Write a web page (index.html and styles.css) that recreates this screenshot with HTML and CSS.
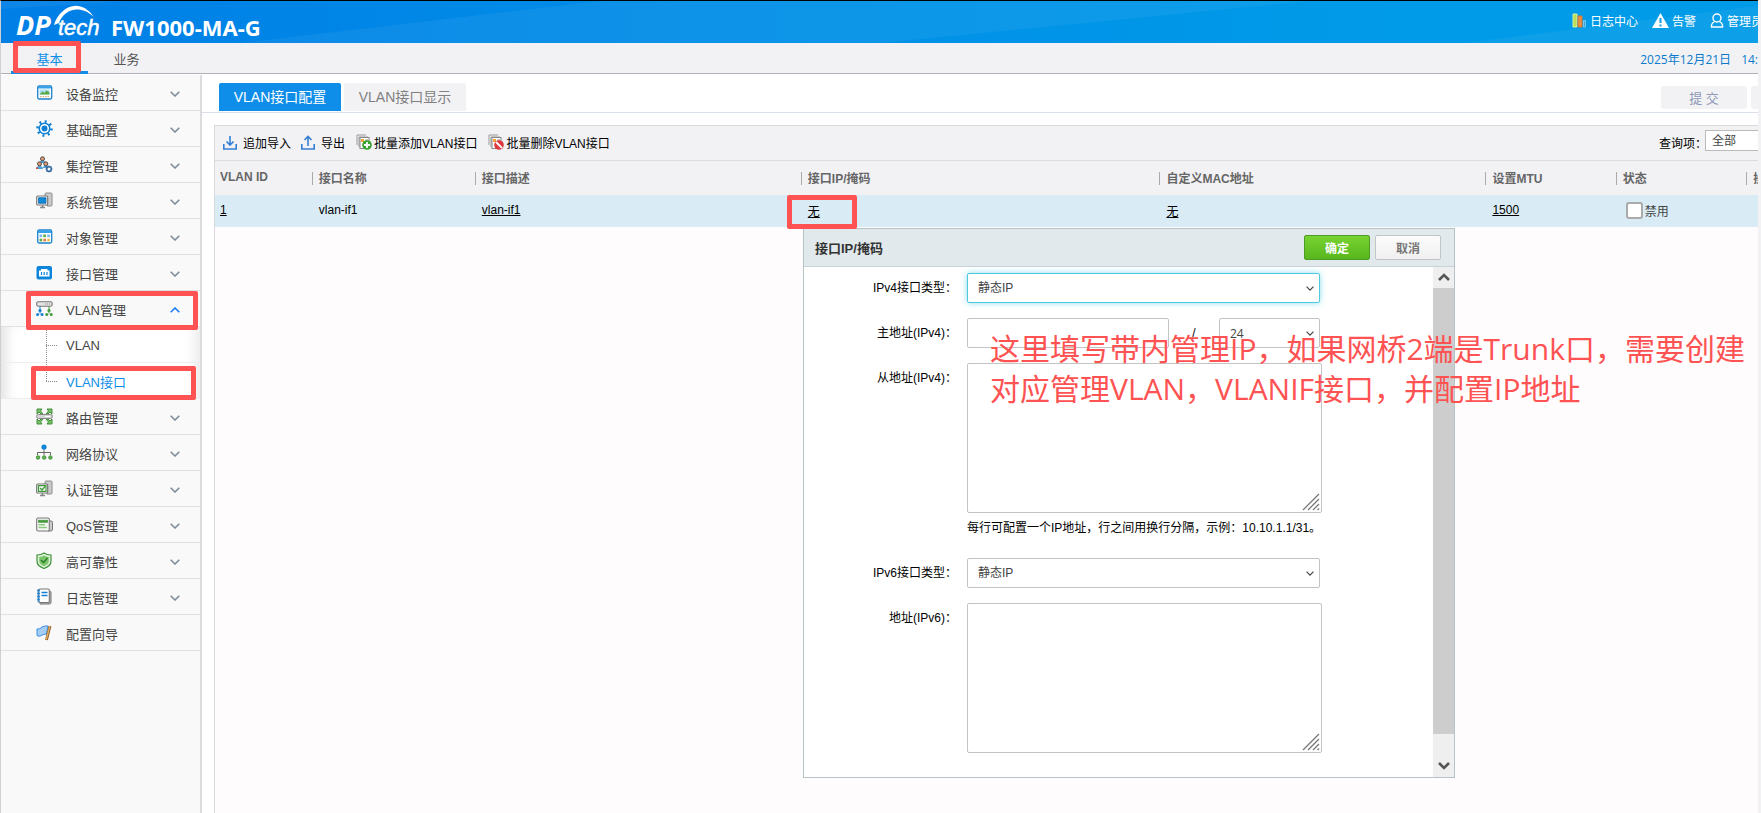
FILE: index.html
```html
<!DOCTYPE html>
<html lang="zh-CN">
<head>
  <meta charset="UTF-8" />
  <meta name="viewport" content="width=device-width, initial-scale=1.0" />
  <title>FW1000-MA-G</title>
  <link rel="stylesheet" href="styles.css">
</head>
<body>

<svg class="sprite" aria-hidden="true">
  <symbol id="chev-down" viewBox="0 0 10 6"><path d="M.7.7 5 5 9.3.7" fill="none" stroke="currentColor" stroke-width="1.5"/></symbol>
  <symbol id="chev-up" viewBox="0 0 10 6"><path d="M.7 5.3 5 1l4.3 4.3" fill="none" stroke="currentColor" stroke-width="1.5"/></symbol>
  <symbol id="arrow-up" viewBox="0 0 12 8"><path d="M1 7 6 2l5 5" fill="none" stroke="currentColor" stroke-width="2.6"/></symbol>
  <symbol id="arrow-down" viewBox="0 0 12 8"><path d="m1 1 5 5 5-5" fill="none" stroke="currentColor" stroke-width="2.6"/></symbol>
  <symbol id="grip" viewBox="0 0 18 18"><path d="M1 17 17 1M6 17 17 6M11 17l6-6M15.500 17l1.500-1.500" stroke="#777" stroke-width="1.300"/></symbol>
  <symbol id="pc" viewBox="0 0 17 17"><path d="M9 4V2q0-1 1-1h5q1 0 1 1v11q0 1-1 1h-4z" fill="#ccc" stroke="#8c8c8c"/><rect x=".7" y="4" width="11" height="9" rx="1" fill="#fff" stroke="#777" stroke-width="1.200"/><path d="M4 15.500h5M6.500 13v3" stroke="#888" stroke-width="1.500"/></symbol>
</svg>

<div class="app">

  <!-- Header -->
  <header class="header">
    <svg class="facets" viewBox="0 0 1758 42" preserveAspectRatio="none" fill="#fff" aria-hidden="true">
      <path d="M0 0h130L0 8zM240 42 600 0h710L880 42zM1465 42l293-37v37z"/>
    </svg>
    <svg class="logo" viewBox="0 0 100 38" role="img" aria-label="DPtech">
      <text x="15" y="34" class="logo-dp">DP</text>
      <text x="57" y="34" class="logo-tech">tech</text>
      <path d="M53 24C58 7 78-5 93 16 79 3 63 8 58 22z" fill="#fff"/>
    </svg>
    <h1>FW1000-MA-G</h1>
    <div class="header-links">
      <a href="#">
        <svg width="15" height="15" viewBox="0 0 15 15"><path d="M1 1h4v13H1z" fill="#b9dd55" stroke="#d9f0a0"/><path d="M6 3h4v11H6z" fill="#ef8d3a" stroke="#c77a3c"/><path d="M11.500 7.500h2v6.500h-2z" fill="#3aa4dc" stroke="#79c8ef"/></svg>
        日志中心
      </a>
      <a href="#">
        <svg width="17" height="15" viewBox="0 0 17 15"><path d="M8.500 0 17 15H0z" fill="#fff"/><path d="M7.500 5h2v5h-2zM7.500 11.500h2v2h-2z" fill="#079ae6"/></svg>
        告警
      </a>
      <a href="#">
        <svg width="14" height="15" viewBox="0 0 14 15" fill="none" stroke="#fff" stroke-width="1.400"><circle cx="7" cy="5" r="4"/><path d="M4.500 8.500Q1 10.500 1.500 14h11Q13 10.500 9.500 8.500"/></svg>
        管理员
      </a>
    </div>
  </header>

  <nav class="topnav">
    <a href="#" class="current">基本</a>
    <a href="#">业务</a>
    <div class="clock"><span>2025年12月21日</span><span>14:</span></div>
  </nav>

  <div class="main">

    <!-- Sidebar -->
    <aside class="sidebar">
      <ul class="menu">
        <li><a href="#">
          <svg class="icon" viewBox="0 0 17 17"><rect x="1.700" y="2" width="14" height="13" rx="1.500" fill="#fff" stroke="#1b82cf" stroke-width="1.300"/><path d="M2 2.500h13.400v2H2z" fill="#36a0ea"/><path d="M3.500 5.500h10v5h-10z" fill="#aadcf5"/><path d="m3.500 10.500 3-3 2 1.500 2-2.500 3 2v2z" fill="#58a942"/><path d="M4 12.700h9.500" stroke="#d39a63" stroke-dasharray="1.500 1"/></svg>
          <span>设备监控</span><svg class="chev"><use href="#chev-down"/></svg></a></li>
        <li><a href="#">
          <svg class="icon" viewBox="0 0 17 17"><circle cx="8.500" cy="8.500" r="7" fill="none" stroke="#0f80d4" stroke-width="2.600" stroke-dasharray="2 3.498"/><circle cx="8.500" cy="8.500" r="5.300" fill="#fff" stroke="#0f80d4" stroke-width="1.500"/><circle cx="8.500" cy="8.500" r="3" fill="#0f80d4"/></svg>
          <span>基础配置</span><svg class="chev"><use href="#chev-down"/></svg></a></li>
        <li><a href="#">
          <svg class="icon" viewBox="0 0 17 17"><path d="M0 13q0-3 3.500-3T7 13zM7 12q0-2.500 3-2.500t3 2.500zM3.500 7h6l-1-2h-4z" fill="#4ba0d8"/><g fill="#e59a72" stroke="#484848"><circle cx="6.500" cy="2.800" r="2"/><circle cx="3.500" cy="7.800" r="2"/><circle cx="9.800" cy="7.800" r="2"/></g><path d="M0 11.500h2V13H0z" fill="#d9482b"/><circle cx="13" cy="13" r="2.300" fill="#fff" stroke="#34699a" stroke-width="1.600"/><path d="M13 9.500v1.500M13 15v1.500M9.500 13H11M15 13h1.500M10.500 10.500l1 1M14.500 14.500l1 1M15.500 10.500l-1 1M11.500 14.500l-1 1" stroke="#34699a"/></svg>
          <span>集控管理</span><svg class="chev"><use href="#chev-down"/></svg></a></li>
        <li><a href="#">
          <svg class="icon" viewBox="0 0 17 17"><use href="#pc"/><path d="M2.500 5.700h7.500v5.600H2.500z" fill="#0d8ad8" stroke="#1568a8" stroke-width=".8"/></svg>
          <span>系统管理</span><svg class="chev"><use href="#chev-down"/></svg></a></li>
        <li><a href="#">
          <svg class="icon" viewBox="0 0 17 17"><rect x="1.700" y="2" width="14" height="13" rx="1.500" fill="#fff" stroke="#1b82cf" stroke-width="1.300"/><path d="M2 2.500h13.400v2.500H2z" fill="#36a0ea"/><path d="M3.500 6.500h2.700v2.700H3.500z" fill="#7fb8f0"/><path d="M7.300 6.500H10v2.700H7.300z" fill="#5cae46"/><path d="M11.200 6.500h2.700v2.700h-2.700z" fill="#7fb8f0"/><path d="M3.500 10.700h2.700v2.700H3.500z" fill="#5cae46"/><path d="M7.300 10.700H10v2.700H7.300z" fill="#e98048"/><path d="M11.200 10.700h2.700v2.700h-2.700z" fill="#f0be45"/></svg>
          <span>对象管理</span><svg class="chev"><use href="#chev-down"/></svg></a></li>
        <li><a href="#">
          <svg class="icon" viewBox="0 0 17 17"><rect x=".5" y="2" width="15.500" height="13.500" rx="2" fill="#0c85dd"/><path d="M3 6.500h2V5h6.500v1.500h2v6H3z" fill="#fff"/><path d="M5.500 8v3M8.200 8v3M11 8v3" stroke="#0c85dd" stroke-width="1.200"/></svg>
          <span>接口管理</span><svg class="chev"><use href="#chev-down"/></svg></a></li>
        <li><a href="#">
          <svg class="icon" viewBox="0 0 17 17"><rect x=".7" y="1.700" width="15.500" height="4.500" rx="1.800" fill="#e4e4e4" stroke="#777" stroke-width="1.100"/><path d="M9 4h5" stroke="#888" stroke-dasharray="1 1"/><path d="M4 6.500v7" stroke="#1381ce"/><path d="M13 6.500v7" stroke="#419c3e"/><g fill="#1381ce"><circle cx="4" cy="10.500" r="1.600"/><circle cx="1.600" cy="14.500" r="1.500"/><circle cx="6" cy="14.500" r="1.500"/></g><g fill="#419c3e"><circle cx="13" cy="10.500" r="1.600"/><circle cx="10.800" cy="14.500" r="1.500"/><circle cx="15.200" cy="14.500" r="1.500"/></g></svg>
          <span>VLAN管理</span><svg class="chev open"><use href="#chev-up"/></svg></a>
          <ul class="submenu">
            <li><a href="#">VLAN</a></li>
            <li><a href="#" class="current">VLAN接口</a></li>
          </ul>
        </li>
        <li><a href="#">
          <svg class="icon" viewBox="0 0 17 17"><path d="M1 1h5L4.500 3l2.500 3H5L3 4 1 6zM16 1h-5l1.500 2L10 6h2l2-2 2 2zM1 16h5l-1.500-2L7 11H5l-2 2-2-2zM16 16h-5l1.500-2-2.500-3h2l2 2 2-2z" fill="#7cc46c" stroke="#33862d" stroke-width=".9"/><rect x=".6" y="6.500" width="15.800" height="4" rx="1.800" fill="#d5d5d5" stroke="#888"/><path d="M9 8.500h5" stroke="#fff"/></svg>
          <span>路由管理</span><svg class="chev"><use href="#chev-down"/></svg></a></li>
        <li><a href="#">
          <svg class="icon" viewBox="0 0 17 17"><path d="M8 5v6M1.500 11V8.500h13V11" fill="none" stroke="#666"/><circle cx="8" cy="3" r="2.600" fill="#0d84d9"/><g fill="#62b054" stroke="#378a31" stroke-width=".8"><circle cx="2" cy="13.500" r="1.800"/><circle cx="8.200" cy="13.500" r="1.800"/><circle cx="14.400" cy="13.500" r="1.800"/></g></svg>
          <span>网络协议</span><svg class="chev"><use href="#chev-down"/></svg></a></li>
        <li><a href="#">
          <svg class="icon" viewBox="0 0 17 17"><use href="#pc"/><path d="M2.500 5.700h7.500v5.600H2.500z" fill="#fff" stroke="#3a9a35" stroke-width="1.200"/><path d="m4 8 2 2 3-3.500" fill="none" stroke="#3a9a35" stroke-width="1.300"/></svg>
          <span>认证管理</span><svg class="chev"><use href="#chev-down"/></svg></a></li>
        <li><a href="#">
          <svg class="icon" viewBox="0 0 17 17"><path d="M13 5h2q1.500 0 1.500 1.500V13q0 2-1.500 2h-3" fill="#ccc" stroke="#777"/><rect x=".7" y="2" width="12.600" height="13" rx="1.500" fill="#f7f7f7" stroke="#777" stroke-width="1.100"/><path d="M2.500 4.300h9v2h-9z" fill="#4aa53e" stroke="#2f8527" stroke-width=".7"/><path d="M2.500 8.700h6.500M2.500 11.500h8.500" stroke="#8acc7d" stroke-width="1.500"/></svg>
          <span>QoS管理</span><svg class="chev"><use href="#chev-down"/></svg></a></li>
        <li><a href="#">
          <svg class="icon" viewBox="0 0 17 17"><path d="M8 1q3 2 7 2v6q0 5-7 7.500Q1 14 1 9V3q4 0 7-2z" fill="#dff2d9" stroke="#3b9137" stroke-width="1.200"/><path d="M8 3.500q2.500 1.300 4.800 1.500v4q0 3.300-4.800 5.200Q3.200 12.300 3.200 9V5Q5.500 4.800 8 3.500z" fill="#7bc66b"/><path d="m5 8 2.500 2.500L11.500 6" fill="none" stroke="#267a25" stroke-width="1.400"/></svg>
          <span>高可靠性</span><svg class="chev"><use href="#chev-down"/></svg></a></li>
        <li><a href="#">
          <svg class="icon" viewBox="0 0 17 17"><path d="M4 3h9.500q1.500 0 1.500 1.500v10q0 1.500-1.500 1.500H4z" fill="#bbb" stroke="#777"/><rect x="2.700" y="1" width="10.600" height="13.500" rx="1.300" fill="#fff" stroke="#777" stroke-width="1.100"/><path d="M2.500 1.500v12.500" stroke="#0f80d4" stroke-width="2.600" stroke-dasharray="2 1"/><path d="M5.500 4.500h6M5.500 7.500h6" stroke="#0f80d4" stroke-width="1.500"/></svg>
          <span>日志管理</span><svg class="chev"><use href="#chev-down"/></svg></a></li>
        <li><a href="#">
          <svg class="icon" viewBox="0 0 17 17"><path d="M1 5q3 .5 5-2 3-1.500 6-1l-1.500 8q-3 0-5 1.500T1 11.500z" fill="#a5cdf5" stroke="#3b8fe0"/><path d="m14 2-3.500 14" stroke="#8f5a20" stroke-width="2.800"/><path d="m13.800 2-3.400 13.500" stroke="#e4b165" stroke-width="1.300"/></svg>
          <span>配置向导</span></a></li>
      </ul>
    </aside>

    <!-- Content -->
    <section class="content">
      <div class="tabs">
        <button class="tab active">VLAN接口配置</button>
        <button class="tab">VLAN接口显示</button>
        <div class="submit">
          <button disabled>提 交</button>
          <button disabled>取 消</button>
        </div>
      </div>

      <div class="panel">
        <div class="toolbar">
          <button class="tool">
            <svg width="14" height="15" viewBox="0 0 14 15" fill="none" stroke="#347fd3" stroke-width="1.600"><path d="M.8 9v5h12.400V9M7 1v8M3.500 6.500 7 10l3.500-3.500"/></svg>
            追加导入
          </button>
          <button class="tool">
            <svg width="14" height="15" viewBox="0 0 14 15" fill="none" stroke="#347fd3" stroke-width="1.600"><path d="M.8 9v5h12.400V9M7 11V2M3.500 5 7 1.500 10.500 5"/></svg>
            导出
          </button>
          <button class="tool tight">
            <svg width="16" height="16" viewBox="0 0 16 16"><path d="M1 11V1h9M3 13V3h9" fill="none" stroke="#999"/><rect x="4" y="3.500" width="9" height="11" fill="#fff" stroke="#888"/><path d="M5 5h3v3H5z" fill="#f5a43a"/><path d="M9 6h3M9 8h3" stroke="#999"/><circle cx="11" cy="11" r="4.800" fill="#38a32f"/><path d="M11 8v6M8 11h6" stroke="#fff" stroke-width="1.800"/></svg>
            批量添加VLAN接口
          </button>
          <button class="tool tight">
            <svg width="16" height="16" viewBox="0 0 16 16"><path d="M1 11V1h9M3 13V3h9" fill="none" stroke="#999"/><rect x="4" y="3.500" width="9" height="11" fill="#fff" stroke="#888"/><path d="M5 5h3v3H5z" fill="#f5a43a"/><path d="M9 6h3M9 8h3" stroke="#999"/><circle cx="11" cy="11" r="4.800" fill="#e0393c"/><path d="m8 8 6 6" stroke="#fff" stroke-width="1.800"/></svg>
            批量删除VLAN接口
          </button>
          <div class="query">
            <label for="query">查询项：</label>
            <select id="query"><option>全部</option></select>
          </div>
        </div>

        <table class="grid">
          <colgroup>
            <col class="w6"><col class="w10"><col class="w20"><col class="w22"><col class="w20"><col class="w8"><col class="w8"><col class="w6">
          </colgroup>
          <thead>
            <tr>
              <th>VLAN ID</th>
              <th>接口名称</th>
              <th>接口描述</th>
              <th>接口IP/掩码</th>
              <th>自定义MAC地址</th>
              <th>设置MTU</th>
              <th>状态</th>
              <th>操作</th>
            </tr>
          </thead>
          <tbody>
            <tr>
              <td><a href="#">1</a></td>
              <td>vlan-if1</td>
              <td><a href="#">vlan-if1</a></td>
              <td><a href="#">无</a></td>
              <td><a href="#">无</a></td>
              <td><a href="#">1500</a></td>
              <td><label class="check"><input type="checkbox">禁用</label></td>
              <td></td>
            </tr>
          </tbody>
        </table>
      </div>

      <!-- IP dialog -->
      <div class="dialog" role="dialog" aria-labelledby="dialog-title">
        <div class="dialog-head">
          <h2 id="dialog-title">接口IP/掩码</h2>
          <button class="btn ok">确定</button>
          <button class="btn">取消</button>
        </div>
        <div class="dialog-body">
          <form class="form">
            <label for="v4type">IPv4接口类型：</label>
            <div class="select focus">
              <select id="v4type"><option>静态IP</option></select>
              <svg><use href="#chev-down"/></svg>
            </div>

            <label for="v4addr">主地址(IPv4)：</label>
            <div class="addr">
              <input type="text" id="v4addr">
              <span>/</span>
              <div class="select">
                <select aria-label="掩码"><option>24</option></select>
                <svg><use href="#chev-down"/></svg>
              </div>
            </div>

            <label for="v4sub">从地址(IPv4)：</label>
            <div>
              <div class="area"><textarea id="v4sub"></textarea><svg><use href="#grip"/></svg></div>
              <p class="hint">每行可配置一个IP地址，行之间用换行分隔，示例：10.10.1.1/31。</p>
            </div>

            <label for="v6type">IPv6接口类型：</label>
            <div class="select">
              <select id="v6type"><option>静态IP</option></select>
              <svg><use href="#chev-down"/></svg>
            </div>

            <label for="v6addr">地址(IPv6)：</label>
            <div class="area"><textarea id="v6addr"></textarea><svg><use href="#grip"/></svg></div>
          </form>
          <div class="scrollbar">
            <svg><use href="#arrow-up"/></svg>
            <div class="thumb"></div>
            <svg><use href="#arrow-down"/></svg>
          </div>
        </div>
      </div>
    </section>
  </div>

  <!-- Notes drawn over the page -->
  <div class="mark mark-nav"></div>
  <div class="mark mark-menu"></div>
  <div class="mark mark-sub"></div>
  <div class="mark mark-cell"></div>
  <p class="note">这里填写带内管理IP，如果网桥2端是Trunk口，需要创建<br>对应管理VLAN，VLANIF接口，并配置IP地址</p>
</div>

</body>
</html>
```

FILE: styles.css
```css
:root {
  --blue: #0e8ee9;
  --bar: #f2f2f5;
  --line: #dcdcde;
  --mark: #ff5252;
  --font: "Liberation Sans", "Noto Sans CJK SC", sans-serif;
  --font-wide: "Open Sans", "Noto Sans CJK SC", sans-serif;
}

* {
  box-sizing: border-box;
  margin: 0;
  padding: 0;
}

body {
  background: #f2f2f5;
  font-family: var(--font);
  font-size: 12px;
  color: #000;
}

button,
input,
select,
textarea {
  font: inherit;
  color: inherit;
}

button {
  border: none;
  background: none;
  white-space: nowrap;
}

a {
  color: inherit;
  text-decoration: none;
}

ul {
  list-style: none;
}

.sprite {
  position: absolute;
  width: 0;
  height: 0;
}

.app {
  position: relative;
  display: flex;
  flex-direction: column;
  min-height: 100vh;
  margin-right: 3px;
  overflow: hidden;
  border-top: 1px solid #000;
  border-left: 1px solid #d0d0d4;
  background: #fff;
}

/* Header */
.header {
  position: relative;
  display: flex;
  height: 42px;
  color: #fff;
  background: linear-gradient(90deg, #007fe6, #009be8 80%);
}

.facets {
  position: absolute;
  left: 0;
  top: 0;
  width: 100%;
  height: 100%;
  opacity: 0.05;
}

.logo {
  width: 100px;
  height: 38px;
  fill: #fff;
  overflow: visible;
}

.logo-dp {
  font: italic bold 27px "Noto Sans", sans-serif;
}

.logo-tech {
  font: italic 22px "Liberation Sans", sans-serif;
  stroke: #fff;
  stroke-width: 0.5px;
}

.header h1 {
  margin-left: 10px;
  padding-top: 11px;
  font: bold 22px/30px "Noto Sans", sans-serif;
}

.header-links {
  display: flex;
  align-items: center;
  gap: 14px;
  margin-left: auto;
  margin-right: -5px;
  padding-bottom: 3px;
  white-space: nowrap;
}

.header-links a {
  display: flex;
  align-items: center;
  gap: 3px;
}

/* Top nav */
.topnav {
  display: flex;
  height: 31px;
  padding-left: 10px;
  border-bottom: 1px solid #b0b2b8;
  background: var(--bar);
  font-size: 13px;
  line-height: 34px;
  color: #555;
}

.topnav a {
  width: 77px;
  height: 31px;
  text-align: center;
}

.topnav .current {
  color: var(--blue);
  border-bottom: 3px solid var(--blue);
}

.clock {
  display: flex;
  gap: 10px;
  margin-left: auto;
  font-family: var(--font-wide);
  font-size: 12px;
  color: #0a7bcb;
}

.main {
  display: flex;
  flex: 1;
  padding-top: 1px;
}

/* Sidebar */
.sidebar {
  flex: none;
  width: 201px;
  border-right: 2px solid #dcdcdf;
  background: #f9f9f9;
}

.menu > li > a {
  display: flex;
  align-items: center;
  height: 36px;
  padding: 2px 20px 0 35px;
  border-bottom: 1px solid #e2e2e2;
  font-size: 13px;
  color: #444;
}

.icon {
  width: 17px;
  height: 17px;
  margin: 0 13px 2px 0;
}

.chev {
  width: 10px;
  height: 6px;
  margin-left: auto;
  color: #7c8794;
}

.chev.open {
  color: #1677f2;
}

.submenu {
  position: relative;
  background: #fff;
  box-shadow: inset 14px 0 14px -10px #ddd, inset -14px 0 14px -10px #e8e8e8;
}

.submenu::before {
  content: "";
  position: absolute;
  left: 45px;
  top: 0;
  height: 54px;
  border-left: 1px dotted #888;
}

.submenu a {
  display: flex;
  align-items: center;
  height: 36px;
  padding: 2px 0 0 45px;
  border-bottom: 1px solid #eee;
  font-size: 13px;
  color: #444;
}

.submenu a::before {
  content: "";
  width: 11px;
  margin-right: 9px;
  border-top: 1px dotted #888;
}

.submenu .current {
  color: var(--blue);
}

/* Content */
.content {
  position: relative;
  display: flex;
  flex-direction: column;
  flex: 1;
  min-width: 0;
}

.tabs {
  display: flex;
  gap: 3px;
  height: 38px;
  padding: 8px 0 0 17px;
  border-bottom: 1px solid #dae0e9;
}

.tab {
  width: 122px;
  height: 28px;
  padding-bottom: 2px;
  border-radius: 2px 2px 0 0;
  background: var(--bar);
  font-size: 14px;
  color: #808080;
}

.tab.active {
  background: var(--blue);
  color: #fff;
}

.submit {
  display: flex;
  gap: 4px;
  margin: 3px -79px 0 auto;
}

.submit button {
  width: 86px;
  height: 23px;
  border-radius: 3px;
  background: #f2f2f4;
  font-size: 13px;
  color: #8e99b8;
}

.panel {
  flex: 1;
  margin: 12px 0 0 12px;
  overflow: hidden;
  border-top: 1px solid #dadadd;
  border-left: 1px solid #dadadd;
  background: #fefcfd;
}

.toolbar {
  display: flex;
  align-items: center;
  gap: 10px;
  height: 35px;
  padding: 0 0 2px 8px;
  border-bottom: 1px solid var(--line);
  background: var(--bar);
}

.tool {
  display: flex;
  align-items: center;
  gap: 6px;
}

.tool.tight {
  gap: 2px;
  margin-left: 1px;
}

.query {
  display: flex;
  align-items: center;
  margin: 0 -60px 0 auto;
}

.query label {
  margin-right: -2px;
}

.query select {
  width: 113px;
  height: 21px;
  margin-bottom: 3px;
  padding-left: 6px;
  appearance: none;
  border: 1px solid #bbb;
  background: #fff;
  color: #444;
}

/* the table runs on past the right edge of the panel */
.grid {
  width: calc(100% + 87px);
  table-layout: fixed;
  border-collapse: collapse;
}

.w6 { width: 6%; }
.w8 { width: 8%; }
.w10 { width: 10%; }
.w20 { width: 20%; }
.w22 { width: 22%; }

.grid th,
.grid td {
  padding: 0 6px 2px;
  text-align: left;
}

.grid th:first-child,
.grid td:first-child {
  padding-left: 5px;
}

.grid th {
  position: relative;
  height: 34px;
  background: var(--bar);
  color: #666;
}

.grid th + th::before {
  content: "";
  position: absolute;
  left: -1px;
  top: 11px;
  height: 13px;
  border-left: 1px solid #aaa;
}

.grid td {
  height: 32px;
  background: #d9ebf5;
}

.grid td a {
  text-decoration: underline;
}

.check {
  display: flex;
  align-items: center;
  gap: 2px;
  padding-left: 3px;
  color: #444;
}

.check input {
  width: 17px;
  height: 17px;
  appearance: none;
  border: 2px solid #aaa;
  border-radius: 3px;
  background: #fff;
}

/* Dialog */
.dialog {
  position: absolute;
  left: 601px;
  top: 153px;
  width: 652px;
  border: 1px solid #b6c3c6;
  background: #fff;
}

.dialog-head {
  display: flex;
  align-items: center;
  gap: 5px;
  height: 38px;
  padding: 0 13px 0 11px;
  border-bottom: 1px solid #c9d2d8;
  background: #e1e9ec;
}

.dialog-head h2 {
  margin-right: auto;
  font-size: 13px;
  color: #333;
}

.btn {
  width: 66px;
  height: 25px;
  border: 1px solid #c2c4c6;
  border-radius: 2px;
  background: linear-gradient(#fcfcfc, #f0f0f0);
  font-weight: bold;
  color: #777;
}

.btn.ok {
  border-color: #4c9c25;
  background: linear-gradient(#78d232, #58b61c);
  color: #fff;
}

.dialog-body {
  display: flex;
  height: 510px;
}

.form {
  display: grid;
  grid-template-columns: 153px 355px;
  align-content: start;
  gap: 15px 10px;
  flex: 1;
  padding-top: 6px;
}

.form > label {
  text-align: right;
  line-height: 30px;
}

.select {
  position: relative;
  height: 30px;
  margin-right: 2px;
  color: #444;
}

.select select {
  width: 100%;
  height: 30px;
  padding-left: 10px;
  appearance: none;
  border: 1px solid #c3c3c3;
  border-radius: 2px;
  background: #fff;
}

.select svg {
  position: absolute;
  right: 6px;
  top: 13px;
  width: 8px;
  height: 5px;
}

.select.focus select {
  border-color: #4dc8de;
  box-shadow: 0 0 6px #8edeeb;
}

.addr {
  display: flex;
  justify-content: space-between;
  line-height: 30px;
}

.addr input {
  width: 202px;
  height: 30px;
  padding: 0 10px;
  border: 1px solid #c3c3c3;
  border-radius: 2px;
}

.addr .select {
  width: 101px;
  font-family: var(--font-wide);
}

.area {
  position: relative;
  height: 150px;
}

.area textarea {
  width: 100%;
  height: 150px;
  padding: 6px 10px;
  border: 1px solid #c3c3c3;
  border-radius: 2px;
  resize: none;
}

.area svg {
  position: absolute;
  right: 2px;
  bottom: 2px;
  width: 18px;
  height: 18px;
}

.hint {
  line-height: 30px;
  white-space: nowrap;
}

.scrollbar {
  display: flex;
  flex-direction: column;
  align-items: center;
  width: 21px;
  background: #efefef;
  color: #555;
}

.scrollbar svg {
  width: 12px;
  height: 8px;
  margin: 6px 0 7px;
}

.scrollbar .thumb {
  width: 21px;
  height: 446px;
  margin-bottom: auto;
  background: #cdcdcd;
}

/* Notes */
.mark {
  position: absolute;
  border: 5px solid var(--mark);
  border-radius: 2px;
}

.mark-nav { left: 12px; top: 40px; width: 68px; height: 32px; }
.mark-menu { left: 25px; top: 290px; width: 172px; height: 39px; }
.mark-sub { left: 30px; top: 365px; width: 165px; height: 34px; }
.mark-cell { left: 786px; top: 194px; width: 70px; height: 34px; }

.note {
  position: absolute;
  left: 989px;
  top: 328px;
  font: 30px/40px var(--font-wide);
  font-kerning: none;
  color: var(--mark);
  white-space: nowrap;
}
```
